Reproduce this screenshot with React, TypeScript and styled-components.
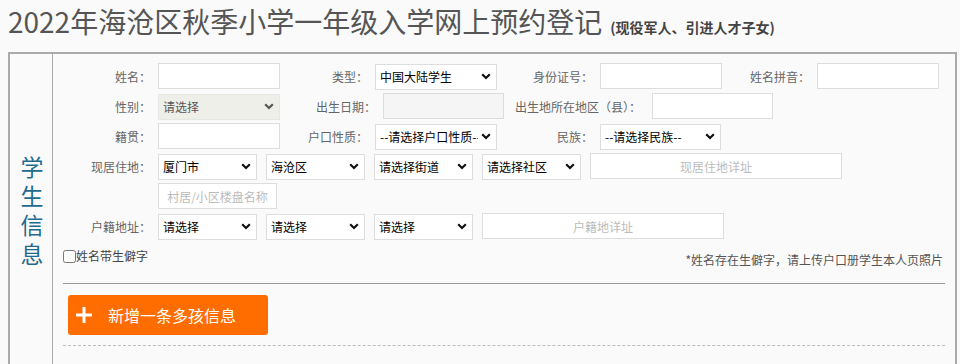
import React from "react";
import styled, { createGlobalStyle } from "styled-components";

const GlobalStyle = createGlobalStyle`
  html, body {
    margin: 0;
    padding: 0;
    overflow: hidden;
    background: #fafafa;
    font-family: "Noto Sans CJK SC", "Noto Sans", sans-serif;
  }
`;

const Chevron = () => (
  <svg width="10" height="7" viewBox="0 0 10 7">
    <path d="M1.2 1.2 L5 5 L8.8 1.2" fill="none" stroke="currentColor" strokeWidth="2.2" />
  </svg>
);

const PlusIcon = () => (
  <svg width="16" height="16" viewBox="0 0 16 16">
    <rect x="6.5" y="0" width="3" height="16" fill="#fff" />
    <rect x="0" y="6.5" width="16" height="3" fill="#fff" />
  </svg>
);

type SelectProps = { w: number; value: string; disabled?: boolean };

const Select = ({ w, value, disabled }: SelectProps) => (
  <SelectWrap $w={w} $disabled={disabled}>
    <NativeSelect disabled={disabled} defaultValue={value}>
      <option>{value}</option>
    </NativeSelect>
    <ArrowBox>
      <Chevron />
    </ArrowBox>
  </SelectWrap>
);

const App = () => {
  return (
    <>
      <GlobalStyle />
      <Page>
        <Header>
          <Title>2022年海沧区秋季小学一年级入学网上预约登记</Title>
          <SubTitle>(现役军人、引进人才子女)</SubTitle>
        </Header>
        <Box>
          <Side>
            <SideText>学生信息</SideText>
          </Side>
          <Content>
            <Row>
              <Label $w={95}>姓名：</Label>
              <Input $w={122} />
              <Label $w={95}>类型：</Label>
              <Select w={122} value="中国大陆学生" />
              <Label $w={103}>身份证号：</Label>
              <Input $w={122} />
              <Label $w={95}>姓名拼音：</Label>
              <Input $w={122} />
            </Row>
            <Row>
              <Label $w={95}>性别：</Label>
              <Select w={122} value="请选择" disabled />
              <Label $w={103}>出生日期：</Label>
              <Input $w={121} disabled />
              <Label $w={148} $align="left" $pl={11}>
                出生地所在地区（县）：
              </Label>
              <Input $w={121} />
            </Row>
            <Row>
              <Label $w={95}>籍贯：</Label>
              <Input $w={122} />
              <Label $w={95}>户口性质：</Label>
              <Select w={122} value="--请选择户口性质--" />
              <Label $w={103}>民族：</Label>
              <Select w={121} value="--请选择民族--" />
            </Row>
            <Row>
              <Label $w={95}>现居住地：</Label>
              <Controls>
                <Select w={99} value="厦门市" />
                <Select w={99} value="海沧区" />
                <Select w={99} value="请选择街道" />
                <Select w={99} value="请选择社区" />
                <Input $w={252} $center placeholder="现居住地详址" />
              </Controls>
            </Row>
            <Row>
              <Indent />
              <Input $w={119} $center placeholder="村居/小区楼盘名称" />
            </Row>
            <Row>
              <Label $w={95}>户籍地址：</Label>
              <Controls>
                <Select w={99} value="请选择" />
                <Select w={99} value="请选择" />
                <Select w={99} value="请选择" />
                <Input $w={242} $center placeholder="户籍地详址" />
              </Controls>
            </Row>
            <CheckRow>
              <CheckLabel>
                <CheckBox type="checkbox" />
                姓名带生僻字
              </CheckLabel>
              <Note>*姓名存在生僻字，请上传户口册学生本人页照片</Note>
            </CheckRow>
            <Divider />
            <AddButton type="button">
              <PlusIcon />
              <span>新增一条多孩信息</span>
            </AddButton>
            <Dashed />
          </Content>
        </Box>
      </Page>
    </>
  );
};

export default App;

// Styles

const Page = styled.div`
  padding-left: 8px;
`;

const Header = styled.div`
  height: 52px;
  box-sizing: border-box;
  padding-top: 4px;
  display: flex;
  align-items: baseline;
  gap: 8px;
`;

const Title = styled.h1`
  margin: 0;
  font-size: 28px;
  line-height: 34px;
  font-weight: 400;
  color: #555;
  white-space: nowrap;
`;

const SubTitle = styled.span`
  font-size: 14px;
  font-weight: 700;
  color: #444;
  white-space: nowrap;
`;

const Box = styled.div`
  width: 949px;
  box-sizing: border-box;
  border: 2px solid #aaa;
  display: flex;
`;

const Side = styled.div`
  width: 42px;
  flex-shrink: 0;
  border-right: 1px solid #aaa;
  display: flex;
  align-items: center;
  justify-content: center;
`;

const SideText = styled.div`
  width: 24px;
  margin-left: 2px;
  font-size: 23px;
  line-height: 29px;
  color: #1f6b8e;
  text-align: center;
  word-break: break-all;
`;

const Content = styled.div`
  flex: 1;
  padding: 9px 10px 20px;
`;

const Row = styled.div`
  display: flex;
  align-items: center;
  height: 26px;
  margin-bottom: 4px;
`;

const Label = styled.label<{ $w: number; $align?: string; $pl?: number }>`
  width: ${(p) => p.$w}px;
  flex-shrink: 0;
  box-sizing: border-box;
  text-align: ${(p) => p.$align || "right"};
  padding-left: ${(p) => p.$pl || 0}px;
  padding-right: 7px;
  font-size: 12px;
  color: #666;
  white-space: nowrap;
`;

const Indent = styled.div`
  width: 95px;
  flex-shrink: 0;
`;

const Controls = styled.div`
  display: flex;
  align-items: center;
  gap: 9px;
`;

const Input = styled.input<{ $w: number; $center?: boolean }>`
  width: ${(p) => p.$w}px;
  height: 26px;
  flex-shrink: 0;
  box-sizing: border-box;
  margin: 0;
  padding: 0 4px;
  border: 1px solid #ddd;
  border-radius: 0;
  background: #fff;
  font-family: inherit;
  font-size: 12px;
  color: #000;
  text-align: ${(p) => (p.$center ? "center" : "left")};
  outline: none;
  &::placeholder {
    color: #bbb;
  }
  &:disabled {
    background: #f5f5f5;
  }
`;

const SelectWrap = styled.div<{ $w: number; $disabled?: boolean }>`
  position: relative;
  width: ${(p) => p.$w}px;
  height: 26px;
  flex-shrink: 0;
  color: ${(p) => (p.$disabled ? "#555" : "#111")};
`;

const NativeSelect = styled.select`
  appearance: none;
  width: 100%;
  height: 26px;
  box-sizing: border-box;
  margin: 0;
  padding: 0 18px 0 4px;
  border: 1px solid #ddd;
  border-radius: 0;
  background: #fff;
  font-family: inherit;
  font-size: 12px;
  color: #000;
  outline: none;
  white-space: nowrap;
  overflow: hidden;
  &:disabled {
    background: #efefea;
    border-color: #e6e6e2;
    color: #555;
    opacity: 1;
  }
`;

const ArrowBox = styled.span`
  position: absolute;
  right: 6px;
  top: 10px;
  display: flex;
  pointer-events: none;
`;

const CheckRow = styled.div`
  display: flex;
  justify-content: space-between;
  align-items: flex-start;
  height: 23px;
  margin-top: 9px;
`;

const CheckLabel = styled.label`
  display: flex;
  align-items: center;
  font-size: 12px;
  line-height: 16px;
  color: #444;
`;

const CheckBox = styled.input`
  margin: 0;
  width: 13px;
  height: 13px;
`;

const Note = styled.div`
  margin-top: 4px;
  padding-right: 2px;
  font-size: 12px;
  line-height: 16px;
  color: #555;
`;

const Divider = styled.div`
  margin-top: 12px;
  border-top: 1px solid #999;
`;

const AddButton = styled.button`
  margin: 11px 0 0 5px;
  width: 200px;
  height: 40px;
  display: flex;
  align-items: center;
  gap: 16px;
  padding: 0 0 0 8px;
  border: none;
  border-radius: 3px;
  background: #ff6d00;
  color: #fff;
  font-family: inherit;
  font-size: 16px;
  cursor: pointer;
`;

const Dashed = styled.div`
  margin-top: 10px;
  border-top: 1px dashed #bbb;
`;
